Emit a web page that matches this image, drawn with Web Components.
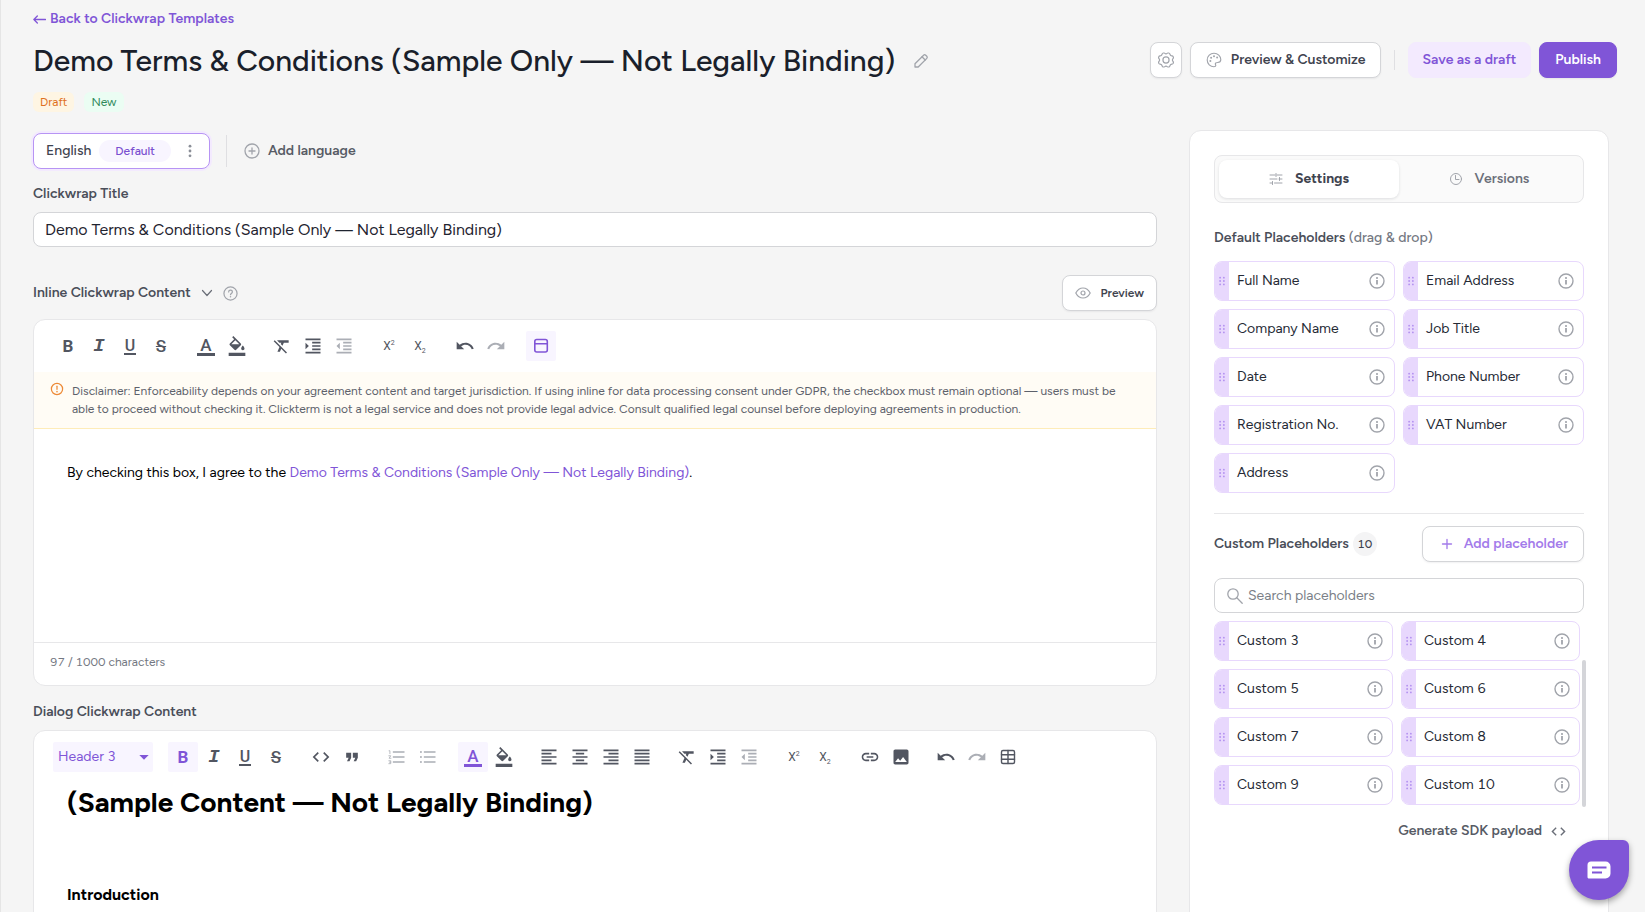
<!DOCTYPE html>
<html lang="en">
<head>
<meta charset="utf-8">
<meta name="viewport" content="width=device-width, initial-scale=1">
<title>Clickwrap template editor</title>
<style>
  body {
    margin: 0;
    min-height: 100vh;
    background: #f5f5f5;
    color: #3f444f;
    font: 14px/20px Figtree, Lato, "Liberation Sans", sans-serif;
    font-variant-numeric: tabular-nums;
    --purple: #8055d7;
    --purple-light: #f3eafe;
    --purple-faint: #f8f5ff;
    --purple-border: #e8d8fd;
    --line: #e7e7e9;
    --control-line: #d4d5d8;
    --icon: #a1a4ab;
    --tool: #525661;
  }
</style>
</head>
<body>
<clickwrap-page></clickwrap-page>

<script>
/*
 * Icons. Each entry is [viewBox size, markup].
 */
const stroke = 'fill="none" stroke="currentColor" stroke-linecap="round" stroke-linejoin="round"'
const ICONS = {
  pencil: [16, `<g ${stroke} stroke-width="1.3"><path d="M2 14v-3.2L10.6 2.2a1.5 1.5 0 0 1 2.1 0l1.1 1.1a1.5 1.5 0 0 1 0 2.1L5.2 14z"/><path d="M9 3.8 12.2 7"/></g>`],
  gear: [24, `<g ${stroke} stroke-width="1.8"><circle cx="12" cy="12" r="4.6"/><path d="M7.8 1.500h1.600c.8 0 1.100 1.300 2.600 1.300s1.800-1.300 2.600-1.300h1.600c1.900 0 1.500 3 3 3.900 1.300.8 2.800.2 3.400 1.400l.5 1.300c.5 1.400-1.500 2.200-1.500 3.900s2 2.500 1.500 3.900l-.5 1.300c-.6 1.200-2.100.6-3.400 1.400-1.500.9-1.100 3.900-3 3.900h-1.600c-.8 0-1.100-1.300-2.600-1.300s-1.800 1.300-2.600 1.300H7.800c-1.900 0-1.500-3-3-3.900-1.300-.8-2.800-.2-3.400-1.400l-.5-1.300C.4 14.500 2.400 13.700 2.400 12S.4 9.500.9 8.100l.5-1.300C2 5.600 3.500 6.200 4.800 5.400c1.500-.9 1.100-3.900 3-3.900z"/></g>`],
  palette: [24, `<path ${stroke} stroke-width="1.700" d="M12 22.200C6.400 22.200 1.800 17.600 1.800 12S6.400 1.800 12 1.800 22.200 6 22.200 11.400c0 3-2.200 4.400-4.700 4.400-2 0-3.500.5-3.500 2.100 0 1 .7 1.500.7 2.500s-1 1.800-2.700 1.800z"/><g fill="currentColor"><circle cx="6.600" cy="13.500" r="1.500"/><circle cx="7.700" cy="8.600" r="1.500"/><circle cx="12" cy="6.200" r="1.500"/><circle cx="16.700" cy="8.200" r="1.500"/></g>`],
  dots: [16, `<g fill="currentColor"><circle cx="8" cy="2.500" r="1.600"/><circle cx="8" cy="8" r="1.600"/><circle cx="8" cy="13.500" r="1.600"/></g>`],
  plusCircle: [16, `<g ${stroke} stroke-width="1.300"><circle cx="8" cy="8" r="7"/><path d="M8 5v6M5 8h6"/></g>`],
  plus: [16, `<path ${stroke} stroke-width="1.800" d="M8 2v12M2 8h12"/>`],
  chevron: [12, `<path ${stroke} stroke-width="1.200" d="m1.500 3.500 4.500 5 4.500-5"/>`],
  help: [16, `<g ${stroke} stroke-width="1.300"><circle cx="8" cy="8" r="7"/><path d="M6 6.300A2 2 0 0 1 10 6.500C10 7.800 8 8 8 9.200"/></g><circle cx="8" cy="11.400" r=".8" fill="currentColor"/>`],
  warn: [16, `<g ${stroke} stroke-width="1.400"><circle cx="8" cy="8" r="6.400"/><path d="M8 4.800v3.600"/></g><circle cx="8" cy="11" r=".9" fill="currentColor"/>`],
  info: [16, `<g ${stroke} stroke-width="1.400"><circle cx="8" cy="8" r="7"/><path stroke-width="1.800" stroke-linecap="butt" d="M8 7v4.500"/></g><circle cx="8" cy="5" r="1.100" fill="currentColor"/>`],
  eye: [16, `<g ${stroke} stroke-width="1.200"><path d="M.8 8S3.400 3 8 3s7.200 5 7.200 5-2.600 5-7.200 5S.8 8 .8 8z"/><circle cx="8" cy="8" r="2"/></g>`],
  sliders: [14, `<g ${stroke} stroke-linecap="butt"><path d="M1 3h5M8 3h5M1 7h7M10 7h3M1 11h2M5.500 11H13"/><path d="M7 1.500v3M10.500 5.500v3M3.500 9.500v3"/></g>`],
  clock: [14, `<g ${stroke}><circle cx="7" cy="7" r="5.500"/><path d="M6.500 3.500V7.500H10"/></g>`],
  search: [16, `<g ${stroke} stroke-width="1.300"><circle cx="6" cy="6" r="5.200"/><path d="m9.800 9.800 5.400 5.400"/></g>`],
  grip: [16, `<g fill="currentColor"><circle cx="5.500" cy="3.500" r="1.200"/><circle cx="10.500" cy="3.500" r="1.200"/><circle cx="5.500" cy="8" r="1.200"/><circle cx="10.500" cy="8" r="1.200"/><circle cx="5.500" cy="12.500" r="1.200"/><circle cx="10.500" cy="12.500" r="1.200"/></g>`],
  chat: [24, `<path fill="#fff" d="M4 3.500h14.500a5 5 0 0 1 5 5v7a5 5 0 0 1-5 5h-16A1.500 1.500 0 0 1 .5 19V7A3.500 3.500 0 0 1 4 3.500z"/><path stroke="#8055d7" stroke-width="2" d="M5 9.500h14.500M5 14.500h10"/>`],
  caret: [24, '<path fill="currentColor" d="m5 9 7 7 7-7z"/>'],
  backArrow: [12, `<path ${stroke} stroke-width="1.200" d="M11.500 6H.8M4 2.800.8 6 4 9.200"/>`],
  fill: [24, '<path fill="currentColor" d="M16.56 8.94 7.620 0 6.210 1.410l2.380 2.380-5.150 5.150c-.59.59-.59 1.540 0 2.120l5.500 5.500c.29.29.68.44 1.060.44s.77-.15 1.060-.44l5.500-5.500c.59-.58.59-1.530 0-2.120zM5.210 10 10 5.210 14.790 10H5.210zM19 11.500s-2 2.170-2 3.500c0 1.100.9 2 2 2s2-.9 2-2c0-1.330-2-3.500-2-3.500zM2 20h20v4H2z"/>'],
  clear: [24, '<path fill="currentColor" d="M3.270 5 2 6.270l6.970 6.970L6.500 19h3l1.570-3.660L16.730 21 18 19.730 3.550 5.270 3.270 5zM6 5v.18L8.820 8h2.400l-.72 1.680 2.100 2.100L14.210 8H20V5H6z"/>'],
  indent: [24, '<path fill="currentColor" d="M3 21h18v-2H3v2zM3 8v8l4-4-4-4zm8 9h10v-2H11v2zM3 3v2h18V3H3zm8 6h10V7H11v2zm0 4h10v-2H11v2z"/>'],
  outdent: [24, '<path fill="currentColor" d="M11 17h10v-2H11v2zm-8-5 4 4V8l-4 4zm0 9h18v-2H3v2zM3 3v2h18V3H3zm8 6h10V7H11v2zm0 4h10v-2H11v2z"/>'],
  undo: [24, '<path fill="currentColor" d="M12.500 8c-2.650 0-5.050.99-6.900 2.600L2 7v9h9l-3.620-3.620c1.390-1.160 3.160-1.880 5.120-1.880 3.540 0 6.550 2.310 7.600 5.500l2.370-.78C21.080 11.030 17.150 8 12.500 8z"/>'],
  redo: [24, '<path fill="currentColor" d="M18.400 10.600C16.550 8.990 14.150 8 11.500 8c-4.650 0-8.580 3.030-9.960 7.220L3.900 16c1.050-3.190 4.050-5.500 7.600-5.500 1.950 0 3.730.72 5.120 1.880L13 16h9V7l-3.600 3.600z"/>'],
  box: [20, `<g ${stroke} stroke-width="1.600"><rect x="3.800" y="3.500" width="12.500" height="12.500" rx="2"/><path d="M4 7.800h12"/></g>`],
  code: [24, '<path fill="currentColor" d="M9.400 16.600 4.800 12l4.600-4.600L8 6l-6 6 6 6 1.400-1.400zm5.200 0 4.600-4.600-4.600-4.600L16 6l6 6-6 6-1.400-1.400z"/>'],
  quote: [24, '<path fill="currentColor" d="M6 17h3l2-4V7H5v6h3zm8 0h3l2-4V7h-6v6h3z"/>'],
  orderedList: [24, `<path fill="currentColor" d="M7 5v2h14V5zm0 14h14v-2H7zm0-6h14v-2H7z"/><path ${stroke} d="M2.500 4.500h1V8M2.200 10.500H4.500L2.500 13.500h2.200M2.200 16.500h2.300v3.500H2.200M3 18.200h1.500"/>`],
  bulletList: [24, '<path fill="currentColor" d="M7 5v2h14V5zm0 14h14v-2H7zm0-6h14v-2H7z"/><g fill="currentColor"><circle cx="3.500" cy="6" r="1.200"/><circle cx="3.500" cy="12" r="1.200"/><circle cx="3.500" cy="18" r="1.200"/></g>'],
  alignLeft: [24, '<path fill="currentColor" d="M15 15H3v2h12v-2zm0-8H3v2h12V7zM3 13h18v-2H3v2zm0 8h18v-2H3v2zM3 3v2h18V3H3z"/>'],
  alignCenter: [24, '<path fill="currentColor" d="M7 15v2h10v-2H7zm-4 6h18v-2H3v2zm0-8h18v-2H3v2zm4-6v2h10V7H7zM3 3v2h18V3H3z"/>'],
  alignRight: [24, '<path fill="currentColor" d="M3 21h18v-2H3v2zm6-4h12v-2H9v2zm-6-4h18v-2H3v2zm6-4h12V7H9v2zM3 3v2h18V3H3z"/>'],
  alignJustify: [24, '<path fill="currentColor" d="M3 21h18v-2H3v2zm0-4h18v-2H3v2zm0-4h18v-2H3v2zm0-4h18V7H3v2zm0-6v2h18V3H3z"/>'],
  link: [24, '<path fill="currentColor" d="M3.900 12c0-1.710 1.390-3.100 3.100-3.100h4V7H7c-2.760 0-5 2.240-5 5s2.240 5 5 5h4v-1.900H7c-1.710 0-3.100-1.390-3.100-3.100zM8 13h8v-2H8v2zm9-6h-4v1.900h4c1.710 0 3.100 1.390 3.100 3.100s-1.390 3.100-3.100 3.100h-4V17h4c2.760 0 5-2.240 5-5s-2.240-5-5-5z"/>'],
  image: [24, '<path fill="currentColor" d="M21 19V5c0-1.100-.9-2-2-2H5c-1.100 0-2 .9-2 2v14c0 1.100.9 2 2 2h14c1.100 0 2-.9 2-2zM8.500 13.500l2.500 3.010L14.500 12l4.500 6H5l3.500-4.500z"/>'],
  table: [20, `<g ${stroke} stroke-width="1.400"><rect x="3.500" y="3.500" width="13" height="13" rx="1.500"/><path d="M3.500 7.800h13M3.500 12.200h13M10 3.500v13"/></g>`]
}

/**
 * Base class that clones a template into an open shadow root.
 */
class BaseElement extends HTMLElement {
  connectedCallback () {
    if (this.shadowRoot) return
    const template = document.createElement('template')
    template.innerHTML = this.render()
    this.attachShadow({ mode: 'open' })
    this.shadowRoot.appendChild(template.content.cloneNode(true))
  }
}

/*
 * <ui-icon name="..." size="16">
 */
customElements.define('ui-icon', class extends BaseElement {
  render () {
    const [box, markup] = ICONS[this.getAttribute('name')]
    const size = this.getAttribute('size') || 16
    return `
<style>
  :host { display: inline-flex; flex: none; }
  svg { display: block; }
</style>
<svg width="${size}" height="${size}" viewBox="0 0 ${box} ${box}" aria-hidden="true">${markup}</svg>`
  }
})

/*
 * <ui-button variant="primary|soft|plain|accent|icon" icon="...">Text</ui-button>
 */
customElements.define('ui-button', class extends BaseElement {
  render () {
    const icon = this.getAttribute('icon')
    const label = this.getAttribute('label')
    return `
<style>
  :host { display: inline-flex; flex: none; }
  button {
    display: flex; align-items: center; gap: 9px; height: 36px; padding: 0 14px 0 15px;
    border: 1px solid var(--control-line); border-radius: 8px; background: #fff;
    box-shadow: 0 1px 2px rgba(16, 24, 40, .06);
    color: #3f444f; font: inherit; font-weight: 600; white-space: nowrap; cursor: pointer;
  }
  ui-icon { color: var(--icon); }
  :host([variant=primary]) button { background: var(--purple); border-color: var(--purple); color: #fff; padding: 0 15px; }
  :host([variant=soft]) button { background: var(--purple-light); border-color: var(--purple-light); color: var(--purple); padding: 0 14px; box-shadow: none; }
  :host([variant=accent]) button, :host([variant=accent]) ui-icon { color: #a37bea; }
  :host([variant=accent]) button { padding: 0 15px 0 18px; gap: 11px; }
  :host([variant=icon]) button { padding: 0 7px; }
  :host([variant=plain]) button { background: none; border-color: transparent; box-shadow: none; color: #575b65; padding: 0 16px; gap: 8px; }
  :host([small]) button { font-size: 12px; padding: 0 12px; }
  :host([reverse]) button { flex-direction: row-reverse; }
  :host([reverse]) ui-icon { color: #6b6f79; }
</style>
<button type="button" ${label ? `aria-label="${label}"` : ''}>
  ${icon ? `<ui-icon name="${icon}" size="${this.getAttribute('icon-size') || 16}"></ui-icon>` : ''}
  <slot></slot>
</button>`
  }
})

/*
 * <status-badge tone="orange|green|purple">
 */
customElements.define('status-badge', class extends BaseElement {
  render () {
    return `
<style>
  :host { display: inline-flex; padding: 0 7px; border-radius: 6px; font-size: 12px; }
  :host([tone=orange]) { background: #fef5e3; color: #df7020; }
  :host([tone=green]) { background: #ebfdf3; color: #2f8a5c; }
  :host([tone=purple]) { background: var(--purple-faint); color: #7a4fd0; padding: 1px 16px; border-radius: 12px; }
</style>
<slot></slot>`
  }
})

/*
 * Top of the page: back link, title and actions.
 */
customElements.define('page-header', class extends BaseElement {
  render () {
    return `
<style>
  :host { display: flex; flex-direction: column; gap: 13px; padding: 9px 28px 0 32px; }
  a { display: inline-flex; align-items: center; gap: 4px; align-self: flex-start; color: var(--purple); font-weight: 600; text-decoration: none; }
  .row, .title, .actions, .badges { display: flex; align-items: center; }
  .row { justify-content: space-between; gap: 24px; }
  .title { gap: 18px; }
  h1 { margin: 0; color: #1a1f2b; font-size: 30px; line-height: 38px; font-weight: 500; }
  .edit { display: flex; padding: 0; border: 0; background: none; color: var(--icon); }
  .actions { gap: 8px; align-self: flex-start; }
  .actions i { width: 1px; height: 20px; margin: 0 5px; background: #dfdfe2; }
  .badges { gap: 10px; margin-top: -1px; }
</style>
<a href="#"><ui-icon name="backArrow" size="13"></ui-icon>Back to Clickwrap Templates</a>
<div class="row">
  <div class="title">
    <h1>Demo Terms &amp; Conditions (Sample Only — Not Legally Binding)</h1>
    <button class="edit" type="button" aria-label="Edit title"><ui-icon name="pencil"></ui-icon></button>
  </div>
  <div class="actions">
    <ui-button variant="icon" icon="gear" label="Options"></ui-button>
    <ui-button icon="palette">Preview &amp; Customize</ui-button>
    <i></i>
    <ui-button variant="soft">Save as a draft</ui-button>
    <ui-button variant="primary">Publish</ui-button>
  </div>
</div>
<div class="badges">
  <status-badge tone="orange">Draft</status-badge>
  <status-badge tone="green">New</status-badge>
</div>`
  }
})

/*
 * Language tabs.
 */
customElements.define('language-bar', class extends BaseElement {
  render () {
    return `
<style>
  :host { display: flex; align-items: center; }
  .tab {
    display: flex; align-items: center; gap: 8px; height: 36px; padding: 0 12px;
    border: 1px solid #b794f4; border-radius: 8px; background: #fff;
    box-shadow: 0 0 0 2px var(--purple-light); color: #3f444f; font: inherit; font-weight: 500;
  }
  .tab ui-icon { margin-left: 4px; color: #8b8f98; }
  i { width: 1px; height: 32px; margin-left: 16px; background: #dfdfe2; }
</style>
<button class="tab" type="button">English <status-badge tone="purple">Default</status-badge><ui-icon name="dots" size="14"></ui-icon></button>
<i></i>
<ui-button variant="plain" icon="plusCircle">Add language</ui-button>`
  }
})

/*
 * <editor-toolbar groups="bold italic | undo redo" active="bold" disabled="redo">
 */
const GLYPHS = {
  bold: '<b>B</b>',
  italic: '<b class="italic">I</b>',
  underline: '<span class="underline">U</span>',
  strike: '<s>S</s>',
  color: '<span class="color">A</span>',
  super: '<span class="script">X<sup>2</sup></span>',
  sub: '<span class="script">X<sub>2</sub></span>'
}
customElements.define('editor-toolbar', class extends BaseElement {
  tool (name) {
    const active = (this.getAttribute('active') || '').split(' ').includes(name)
    const disabled = (this.getAttribute('disabled') || '').split(' ').includes(name)
    const content = GLYPHS[name] || `<ui-icon name="${name}" size="20"></ui-icon>`
    return `<button type="button" aria-label="${name}" class="${active ? 'active' : ''}" ${disabled ? 'disabled' : ''}>${content}</button>`
  }

  render () {
    const groups = this.getAttribute('groups').split('|').map(group =>
      `<div class="group">${group.trim().split(' ').map(name => this.tool(name)).join('')}</div>`)
    const header = `
<div class="format">
  <select aria-label="Text format"><option>Header 3</option><option>Normal</option></select>
  <ui-icon name="caret" size="16"></ui-icon>
</div>`
    return `
<style>
  :host { display: flex; flex-wrap: wrap; gap: 15px; padding: 11px 19px; }
  .group { display: flex; gap: 1px; }
  button {
    display: grid; place-items: center; width: 30px; height: 30px; padding: 0;
    border: 0; border-radius: 2px; background: none; color: var(--tool);
    font: 500 17px/17px Roboto, sans-serif;
  }
  button:disabled { color: #abaeb5; }
  .active { background: var(--purple-faint); color: var(--purple); }
  .italic { font: italic bold 19px/17px "Liberation Mono", monospace; }
  .underline { font-size: 16px; line-height: 15px; padding: 0 1px; border-bottom: 2px solid; }
  .color { line-height: 16px; padding: 0 3px; border-bottom: 3px solid; }
  .script { font: 12px/14px Roboto, sans-serif; }
  sup, sub { font-size: 7px; line-height: 0; }
  .format { display: grid; grid-template-columns: 1fr 17px; align-items: center; width: 100px; height: 30px; background: var(--purple-faint); color: var(--purple); border-radius: 2px; }
  select { grid-area: 1 / 1 / 2 / 3; height: 30px; padding: 0 5px; border: 0; background: none; color: inherit; font: inherit; appearance: none; }
  .format ui-icon { grid-area: 1 / 2; pointer-events: none; }
</style>
${this.hasAttribute('header') ? header : ''}${groups.join('')}`
  }
})

/*
 * White card round an editor. Slots: toolbar, notice, default, footer.
 */
customElements.define('editor-card', class extends BaseElement {
  render () {
    return `
<style>
  :host { display: block; border: 1px solid var(--line); border-radius: 12px; background: #fff; }
  .content { min-height: 146px; padding: 34px 33px 33px; color: #000; }
  :host([tall]) .content { padding-top: 1px; min-height: 400px; }
</style>
<slot name="toolbar"></slot>
<slot name="notice"></slot>
<div class="content"><slot></slot></div>
<slot name="footer"></slot>`
  }
})

/*
 * Left column: title field and both editors.
 */
customElements.define('clickwrap-form', class extends BaseElement {
  render () {
    return `
<style>
  :host { display: flex; flex-direction: column; }
  label, h2 { margin: 0; color: #4a4e59; font-size: 14px; font-weight: 600; line-height: 20px; }
  label { margin: 15px 0 8px; }
  input {
    box-sizing: border-box; height: 35px; padding: 0 11px; border: 1px solid var(--control-line); border-radius: 8px;
    background: #fff; color: #1f2430; font: inherit; font-size: 16px;
  }
  .heading { display: flex; align-items: center; gap: 10px; margin: 28px 0 8px; color: #6b6f79; }
  .heading ui-button { margin-left: auto; }
  .heading ui-icon + ui-icon { color: var(--icon); }
  .notice {
    display: flex; gap: 8px; padding: 10px 24px 10px 16px; border-bottom: 1px solid #feecb8;
    background: #fffcf5; color: #5d616b; font-size: 12px; line-height: 18px;
  }
  .notice ui-icon { color: #ed8936; }
  .notice p, .body { margin: 0; }
  .body a { color: var(--purple); text-decoration: none; }
  .footer { padding: 10px 16px 14px; border-top: 1px solid var(--line); color: #747882; font-size: 12px; line-height: 18px; }
  .dialog { margin: 16px 0 8px; }
  h3 { margin: 0 0 57px; font-size: 28px; line-height: 36px; font-weight: 700; }
  h4 { margin: 0; font-size: 16px; line-height: 36px; font-weight: 700; }
</style>
<language-bar></language-bar>
<label for="title">Clickwrap Title</label>
<input id="title" type="text" value="Demo Terms &amp; Conditions (Sample Only — Not Legally Binding)">
<div class="heading">
  <h2>Inline Clickwrap Content</h2>
  <ui-icon name="chevron" size="12"></ui-icon>
  <ui-icon name="help" size="15"></ui-icon>
  <ui-button small icon="eye">Preview</ui-button>
</div>
<editor-card>
  <editor-toolbar slot="toolbar" active="box" disabled="outdent redo"
    groups="bold italic underline strike | color fill | clear indent outdent | super sub | undo redo | box"></editor-toolbar>
  <div class="notice" slot="notice">
    <ui-icon name="warn" size="14"></ui-icon>
    <p>Disclaimer: Enforceability depends on your agreement content and target jurisdiction. If using inline for data processing consent under GDPR, the checkbox must remain optional — users must be able to proceed without checking it. Clickterm is not a legal service and does not provide legal advice. Consult qualified legal counsel before deploying agreements in production.</p>
  </div>
  <p class="body">By checking this box, I agree to the <a href="#">Demo Terms &amp; Conditions (Sample Only — Not Legally Binding)</a>.</p>
  <div class="footer" slot="footer">97 / 1000 characters</div>
</editor-card>
<h2 class="dialog">Dialog Clickwrap Content</h2>
<editor-card tall>
  <editor-toolbar slot="toolbar" header active="bold color" disabled="orderedList bulletList outdent redo"
    groups="bold italic underline strike | code quote | orderedList bulletList | color fill | alignLeft alignCenter alignRight alignJustify | clear indent outdent | super sub | link image | undo redo table"></editor-toolbar>
  <h3>(Sample Content — Not Legally Binding)</h3>
  <h4>Introduction</h4>
</editor-card>`
  }
})

/*
 * A draggable placeholder.
 */
customElements.define('placeholder-chip', class extends BaseElement {
  render () {
    return `
<style>
  :host {
    display: flex; align-items: center; box-sizing: border-box; height: 40px; overflow: hidden;
    border: 1px solid var(--purple-border); border-radius: 8px; background: #fff; color: #252a35;
  }
  .grip { display: grid; place-items: center; align-self: stretch; width: 14px; margin-right: 8px; background: var(--purple-border); color: #b391f0; }
  .name { flex: 1; }
  button { display: flex; padding: 0 9px; border: 0; background: none; color: var(--icon); }
</style>
<span class="grip"><ui-icon name="grip" size="12"></ui-icon></span>
<span class="name"><slot></slot></span>
<button type="button" aria-label="Info"><ui-icon name="info"></ui-icon></button>`
  }
})

/*
 * Right column: settings.
 */
const DEFAULTS = ['Full Name', 'Email Address', 'Company Name', 'Job Title', 'Date', 'Phone Number', 'Registration No.', 'VAT Number', 'Address']
const CUSTOM = ['Custom 3', 'Custom 4', 'Custom 5', 'Custom 6', 'Custom 7', 'Custom 8', 'Custom 9', 'Custom 10']
const chips = names => names.map(name => `<placeholder-chip>${name}</placeholder-chip>`).join('')

customElements.define('settings-panel', class extends BaseElement {
  render () {
    return `
<style>
  :host { display: block; box-sizing: border-box; padding: 24px; border: 1px solid var(--line); border-radius: 12px; background: #fff; }
  .tabs { display: flex; padding: 4px; border: 1px solid var(--line); border-radius: 8px; background: #fafafa; }
  .tabs button {
    display: flex; flex: 1; align-items: center; justify-content: center; gap: 12px; height: 38px;
    border: 0; border-radius: 8px; background: none; color: #6b6f79; font: inherit; font-weight: 600;
  }
  .tabs ui-icon { color: var(--icon); }
  .tabs [aria-selected=true] { background: #fff; color: #3f444f; font-weight: 700; box-shadow: 0 1px 3px rgba(16, 24, 40, .12); }
  h2 { margin: 0; color: #4a4e59; font-size: 14px; font-weight: 600; line-height: 20px; }
  h2 span { color: #747882; font-weight: 500; }
  .default { margin: 25px 0 13px; }
  .grid { display: grid; flex: 1; grid-template-columns: 1fr 1fr; gap: 8px; }
  hr { margin: 20px 0 12px; border: 0; border-top: 1px solid var(--line); }
  .custom { display: flex; align-items: center; gap: 4px; }
  .custom ui-button { margin-left: auto; }
  .count { min-width: 24px; border-radius: 12px; background: #f4f4f5; color: #3f444f; font-size: 12px; font-weight: 500; line-height: 24px; text-align: center; }
  .search {
    display: flex; align-items: center; gap: 5px; height: 33px; margin: 16px 0 8px; padding: 0 12px;
    border: 1px solid var(--control-line); border-radius: 8px; color: var(--icon);
  }
  input { flex: 1; min-width: 0; padding: 0; border: 0; outline: 0; background: none; font: inherit; }
  input::placeholder { color: #7b7f88; }
  .list { display: flex; align-items: flex-end; gap: 2px; margin-right: -2px; }
  .list .grid { padding-bottom: 2px; }
  .thumb { width: 4px; height: 147px; border-radius: 2px; background: #d4d5d9; }
  .sdk { display: flex; justify-content: flex-end; margin-top: 6px; }
</style>
<div class="tabs" role="tablist">
  <button type="button" role="tab" aria-selected="true"><ui-icon name="sliders" size="14"></ui-icon>Settings</button>
  <button type="button" role="tab" aria-selected="false"><ui-icon name="clock" size="14"></ui-icon>Versions</button>
</div>
<h2 class="default">Default Placeholders <span>(drag &amp; drop)</span></h2>
<div class="grid">${chips(DEFAULTS)}</div>
<hr>
<div class="custom">
  <h2>Custom Placeholders</h2>
  <span class="count">10</span>
  <ui-button variant="accent" icon="plus" icon-size="12">Add placeholder</ui-button>
</div>
<div class="search">
  <ui-icon name="search"></ui-icon>
  <input type="search" placeholder="Search placeholders" aria-label="Search placeholders">
</div>
<div class="list">
  <div class="grid">${chips(CUSTOM)}</div>
  <div class="thumb"></div>
</div>
<div class="sdk"><ui-button variant="plain" icon="code" icon-size="17" reverse>Generate SDK payload</ui-button></div>`
  }
})

/*
 * Chat button that floats over the page.
 */
customElements.define('chat-launcher', class extends BaseElement {
  render () {
    return `
<style>
  :host { position: fixed; right: 16px; bottom: 12px; }
  button {
    display: grid; place-items: center; width: 60px; height: 60px; padding: 0; border: 0;
    border-radius: 30px 6px 30px 30px; background: var(--purple); box-shadow: 0 3px 6px rgba(0, 0, 0, .35);
  }
</style>
<button type="button" aria-label="Open chat"><ui-icon name="chat" size="24"></ui-icon></button>`
  }
})

customElements.define('clickwrap-page', class extends BaseElement {
  render () {
    return `
<style>
  :host { display: block; height: 100vh; overflow: hidden; border-left: 1px solid #e5e5e5; box-sizing: border-box; }
  main { display: flex; gap: 32px; padding: 18px 36px 0 32px; }
  clickwrap-form { flex: 1; min-width: 0; padding-top: 3px; }
  settings-panel { flex: 0 0 420px; }
</style>
<page-header></page-header>
<main>
  <clickwrap-form></clickwrap-form>
  <settings-panel></settings-panel>
</main>
<chat-launcher></chat-launcher>`
  }
})
</script>
</body>
</html>
